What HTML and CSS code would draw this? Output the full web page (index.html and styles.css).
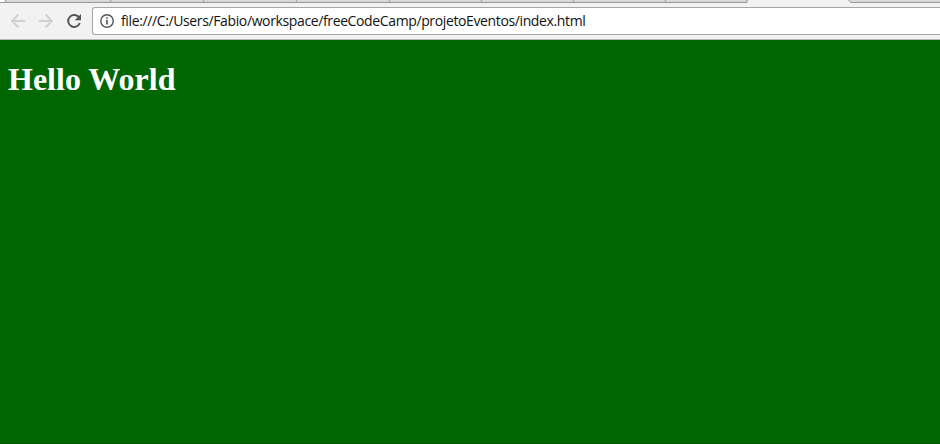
FILE: index.html
```html
<!DOCTYPE html>
<html lang="en">
<head>
<meta charset="utf-8">
<title>Hello World</title>
<link rel="stylesheet" href="styles.css">
</head>
<body>
<header class="browser">
  <svg class="tabs" width="940" height="3" viewBox="0 0 940 3" aria-hidden="true">
    <rect width="940" height="3" fill="#d9d9d9"/>
    <path d="M0 0h5v2H0z" fill="#fff"/>
    <path d="M0 2.5H940" stroke="#999"/>
    <path d="M748.5 0L747 3H851L848.5 0z" fill="#f2f2f2"/>
    <path d="M5 0l1 2M110 0l1.5 2.5M203 0l1.5 2.5M296 0l1.5 2.5M389 0l1.5 2.5M481 0l1.5 2.5M573 0l1.5 2.5M665 0l1.5 2.5M747.5 0l-1.5 2.5M848.5 0l2 2.5" fill="none" stroke="#999"/>
  </svg>
  <div class="toolbar">
    <svg class="nav" width="92" height="36" viewBox="0 3 92 36" aria-hidden="true">
      <g fill="none" stroke="#d0d0d0" stroke-width="1.8">
        <path d="M25 21H12.5M18.5 14.5L12 21l6.5 6.5"/>
        <path d="M39 21H51.5M45.5 14.5L52 21l-6.5 6.5"/>
      </g>
      <path d="M79.3 17.8A6 6 0 1 0 79.8 23" fill="none" stroke="#555" stroke-width="2"/>
      <path d="M81 14v6.3h-6.3z" fill="#555"/>
    </svg>
    <div class="address">
      <svg class="info" width="14" height="14" viewBox="0 0 14 14" aria-hidden="true">
        <circle cx="7" cy="7" r="6.2" fill="none" stroke="#555" stroke-width="1.4"/>
        <path d="M7 6v4.5M7 3.3v1.5" stroke="#555" stroke-width="1.7"/>
      </svg>
      <span class="url">file:///C:/Users/Fabio/workspace/freeCodeCamp/projetoEventos/index.html</span>
    </div>
  </div>
</header>
<main class="page"><h1 class="title">Hello World</h1></main>
</body>
</html>
```
FILE: styles.css
```css
body {
  margin: 0;
  height: 444px;
  display: flex;
  flex-direction: column;
  overflow: hidden;
  background: #060;
}
.tabs, .nav {
  display: block;
  flex: none;
}
.toolbar {
  box-sizing: border-box;
  height: 37px;
  display: flex;
  background: #f2f2f2;
  border-bottom: 1px solid #b6b4b6;
}
.address {
  box-sizing: border-box;
  flex: 1;
  height: 28px;
  margin-top: 4px;
  padding-left: 7px;
  display: flex;
  align-items: center;
  gap: 7px;
  background: #fff;
  border: 1px solid #a6a6a6;
  border-right: 0;
  border-radius: 3px 0 0 3px;
}
.info {
  flex: none;
}
.url {
  font: 14px/20px "Open Sans", sans-serif;
  letter-spacing: -0.375px;
  white-space: nowrap;
  color: #111;
}
.page {
  box-sizing: border-box;
  flex: 1;
  padding: 21px 8px 0;
  border-bottom: 1px solid #005700;
}
.title {
  margin: 0;
  font: bold 32px/37px "Liberation Serif", serif;
  color: #fff;
}
```
